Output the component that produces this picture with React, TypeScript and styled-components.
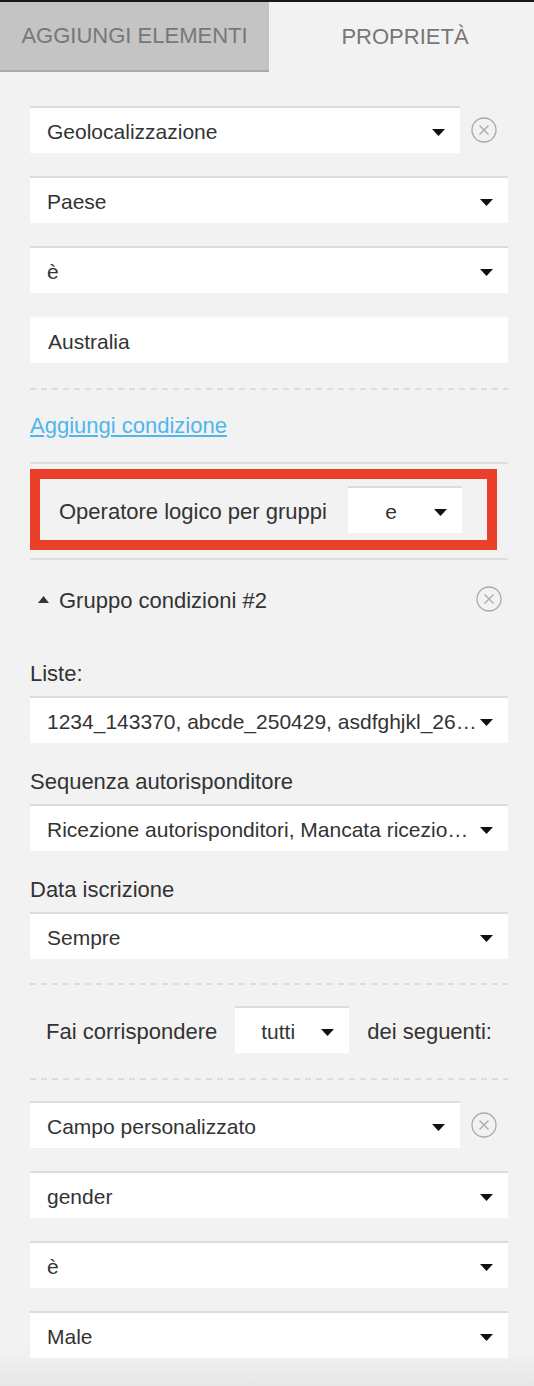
import React from 'react';
import styled, { createGlobalStyle } from 'styled-components';

const GlobalStyle = createGlobalStyle`
  html, body {
    margin: 0;
    padding: 0;
    background: #f2f2f2;
  }
  body {
    font-family: "Liberation Sans", Arial, Helvetica, sans-serif;
    color: #333;
  }
`;

const Page = styled.div`
  min-height: 1386px;
  box-sizing: border-box;
  background: linear-gradient(to bottom, #f2f2f2 1350px, #e7e7e7 1386px);
`;

const TabBar = styled.div`
  display: flex;
  border-top: 2px solid #16191c;
`;

const Tab = styled.div<{ $active?: boolean }>`
  box-sizing: border-box;
  height: 70px;
  display: flex;
  align-items: center;
  justify-content: center;
  font-size: 22px;
  color: #777;
  text-transform: uppercase;
  ${p =>
    p.$active
      ? `flex: 1; background: #f2f2f2; padding-left: 7px;`
      : `width: 269px; background: #c4c4c4; border-bottom: 2px solid #a9a9a9;`}
`;

const Content = styled.div`
  padding: 34px 26px 0 30px;
`;

const Stack = styled.div`
  & > * + * {
    margin-top: 23px;
  }
`;

const FieldRow = styled.div`
  display: flex;
  align-items: center;
`;

const SelectBox = styled.div<{ $small?: boolean }>`
  box-sizing: border-box;
  height: 47px;
  ${p => (p.$small ? 'width: 114px; flex: none;' : 'flex: 1 1 auto; min-width: 0;')}
  background: #fff;
  border-top: 2px solid #dcdcdc;
  display: flex;
  align-items: center;
  padding: 3px 15px 0 ${p => (p.$small ? '0' : '17px')};
  font-size: 21px;
  color: #333;
`;

const SelectValue = styled.span<{ $small?: boolean }>`
  flex: 1;
  min-width: 0;
  white-space: nowrap;
  overflow: hidden;
  text-align: ${p => (p.$small ? 'center' : 'left')};
`;

const TextInput = styled.div`
  box-sizing: border-box;
  height: 47px;
  background: #fff;
  border-top: 2px solid #f8f8f8;
  display: flex;
  align-items: center;
  padding: 3px 17px 0 18px;
  font-size: 21px;
  color: #333;
`;

const RemoveSlot = styled.div`
  width: 48px;
  flex: none;
  display: flex;
  justify-content: center;
`;

const Dashed = styled.div<{ $top: number; $bottom: number }>`
  height: 2px;
  margin: ${p => p.$top}px 0 ${p => p.$bottom}px;
  background: repeating-linear-gradient(to right, #dcdcdc 0 6px, transparent 6px 11px);
`;

const Rule = styled.div<{ $top: number }>`
  height: 2px;
  margin-top: ${p => p.$top}px;
  background: #dedede;
`;

const AddLink = styled.a`
  display: block;
  margin-top: 23px;
  font-size: 22px;
  line-height: 26px;
  color: #4fb6ee;
  text-decoration: underline;
  text-underline-offset: 2px;
`;

const OperatorBox = styled.div`
  margin: 5px 11px 0 0;
  border: 10px solid #ea3f28;
  padding: 7px 25px 7px 19px;
  display: flex;
  align-items: center;
  justify-content: space-between;
`;

const InlineLabel = styled.span`
  font-size: 22px;
  color: #333;
  padding-top: 4px;
  white-space: nowrap;
`;

const GroupHeader = styled.div`
  height: 40px;
  margin: 19px 0 42px;
  padding: 0 6px 0 8px;
  display: flex;
  align-items: center;
`;

const GroupTitle = styled.span`
  flex: 1;
  margin-left: 10px;
  font-size: 22px;
  color: #333;
  padding-top: 3px;
`;

const Field = styled.div`
  & + & {
    margin-top: 26px;
  }
`;

const FieldLabel = styled.div`
  font-size: 22px;
  line-height: 26px;
  margin-bottom: 9px;
  color: #333;
`;

const MatchRow = styled.div`
  display: flex;
  align-items: center;
  gap: 18px;
  padding-left: 16px;
`;

const Caret = () => (
  <svg width="13" height="7" viewBox="0 0 13 7">
    <polygon points="0,0 13,0 6.5,7" fill="#111" />
  </svg>
);

const UpTriangle = () => (
  <svg width="11" height="7" viewBox="0 0 11 7">
    <polygon points="0,7 11,7 5.5,0" fill="#333" />
  </svg>
);

const RemoveIcon = () => (
  <svg width="26" height="26" viewBox="0 0 26 26">
    <circle cx="13" cy="13" r="12" fill="none" stroke="#aaa" strokeWidth="1.3" />
    <path d="M8.5 8.5 L17.5 17.5 M17.5 8.5 L8.5 17.5" stroke="#aaa" strokeWidth="1.3" />
  </svg>
);

const Select: React.FC<{ value: string; small?: boolean }> = ({ value, small }) => (
  <SelectBox $small={small}>
    <SelectValue $small={small}>{value}</SelectValue>
    <Caret />
  </SelectBox>
);

const ConditionHead: React.FC<{ value: string }> = ({ value }) => (
  <FieldRow>
    <Select value={value} />
    <RemoveSlot>
      <RemoveIcon />
    </RemoveSlot>
  </FieldRow>
);

export default function App() {
  return (
    <Page>
      <GlobalStyle />
      <TabBar>
        <Tab>Aggiungi elementi</Tab>
        <Tab $active>Proprietà</Tab>
      </TabBar>
      <Content>
        <Stack>
          <ConditionHead value="Geolocalizzazione" />
          <Select value="Paese" />
          <Select value="è" />
          <TextInput>Australia</TextInput>
        </Stack>
        <Dashed $top={25} $bottom={0} />
        <AddLink>Aggiungi condizione</AddLink>
        <Rule $top={23} />
        <OperatorBox>
          <InlineLabel>Operatore logico per gruppi</InlineLabel>
          <Select value="e" small />
        </OperatorBox>
        <Rule $top={8} />
        <GroupHeader>
          <UpTriangle />
          <GroupTitle>Gruppo condizioni #2</GroupTitle>
          <RemoveIcon />
        </GroupHeader>
        <Field>
          <FieldLabel>Liste:</FieldLabel>
          <Select value="1234_143370, abcde_250429, asdfghjkl_26…" />
        </Field>
        <Field>
          <FieldLabel>Sequenza autorisponditore</FieldLabel>
          <Select value="Ricezione autorisponditori, Mancata ricezio…" />
        </Field>
        <Field>
          <FieldLabel>Data iscrizione</FieldLabel>
          <Select value="Sempre" />
        </Field>
        <Dashed $top={24} $bottom={21} />
        <MatchRow>
          <InlineLabel>Fai corrispondere</InlineLabel>
          <Select value="tutti" small />
          <InlineLabel>dei seguenti:</InlineLabel>
        </MatchRow>
        <Dashed $top={25} $bottom={21} />
        <Stack>
          <ConditionHead value="Campo personalizzato" />
          <Select value="gender" />
          <Select value="è" />
          <Select value="Male" />
        </Stack>
      </Content>
    </Page>
  );
}
